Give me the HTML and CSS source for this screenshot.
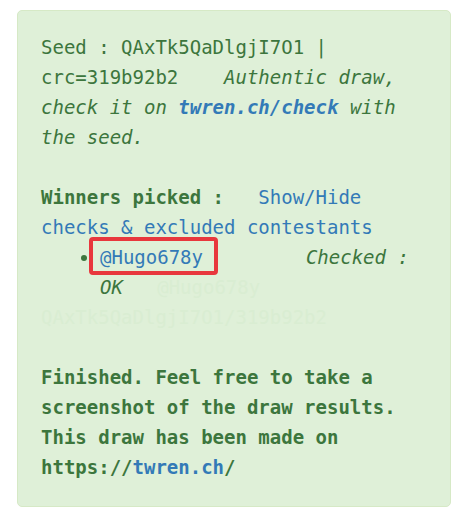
FILE: index.html
```html
<!DOCTYPE html>
<html>
<head>
<meta charset="utf-8">
<link rel="stylesheet" href="styles.css">
</head>
<body>
<div class="alert">
  <div class="para">Seed : QAxTk5QaDlgjI7O1 | crc=319b92b2&nbsp;&nbsp;&nbsp; <em>Authentic draw, check it on <a class="strong" href="#">twren.ch/check</a> with the seed.</em></div>
  <div class="winners"><b>Winners picked :</b>&nbsp;&nbsp; <a href="#">Show/Hide checks &amp; excluded contestants</a></div>
  <ul class="list">
    <li><a class="hl" href="#">@Hugo678y</a>&nbsp;&nbsp;&nbsp;&nbsp;&nbsp;&nbsp;&nbsp;&nbsp; <em>Checked : OK</em>&nbsp;&nbsp; <span class="faint">@Hugo678y</span></li>
  </ul>
  <div class="faint para">QAxTk5QaDlgjI7O1/319b92b2</div>
  <div class="finish">Finished. Feel free to take a screenshot of the draw results. This draw has been made on https://<a href="#">twren.ch</a>/</div>
</div>
</body>
</html>
```

FILE: styles.css
```css
html, body {
  margin: 0;
  padding: 0;
  background: #ffffff;
}
body {
  padding: 10px 15px 16px 17px;
  font-family: "DejaVu Sans Mono", "Liberation Mono", monospace;
  font-size: 19px;
  line-height: 30px;
  color: #3c763d;
}
.alert {
  width: 375px;
  background: #dff0d8;
  border: 1px solid #d6e9c6;
  border-radius: 5px;
  padding: 21px 34px 24px 23px;
}
a {
  color: #337ab7;
  text-decoration: none;
}
a.strong {
  font-weight: bold;
}
em {
  font-style: italic;
}
.para {
  margin-bottom: 30px;
}
.winners b {
  font-weight: bold;
}
.list {
  margin: 0;
  padding: 0 0 0 59px;
}
.list li {
  list-style: disc;
}
.hl {
  position: relative;
}
.hl::after {
  content: "";
  position: absolute;
  left: -11px;
  right: -15px;
  top: -9px;
  bottom: -7px;
  border: 4px solid #e8373d;
  border-radius: 4px;
}
.faint {
  color: #d9edd2;
}
.finish {
  font-weight: bold;
}
.finish a {
  font-weight: bold;
}
```
